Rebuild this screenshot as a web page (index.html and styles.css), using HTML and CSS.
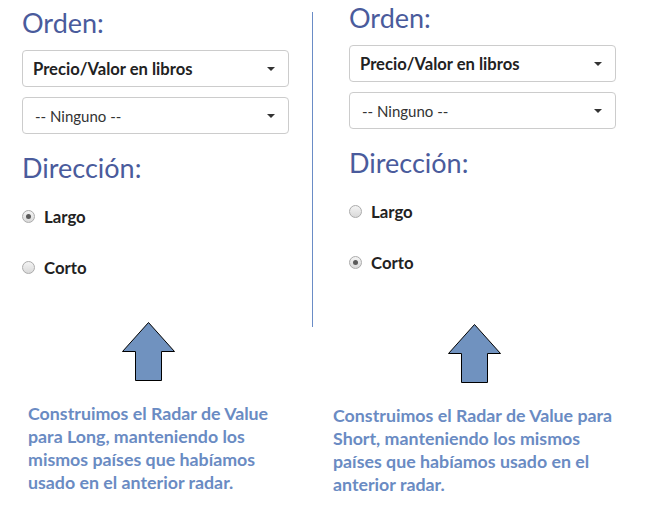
FILE: index.html
```html
<!DOCTYPE html>
<html lang="es">
<head>
<meta charset="utf-8">
<title>Radar de Value</title>
<link rel="stylesheet" href="styles.css">
</head>
<body>
<div class="page">
  <div class="col col-left">
    <div class="form">
      <h2 class="heading">Orden:</h2>
      <div class="select select-strong"><span>Precio/Valor en libros</span><i class="caret"></i></div>
      <div class="select select-plain"><span>-- Ninguno --</span><i class="caret"></i></div>
      <h2 class="heading heading-dir">Dirección:</h2>
      <label class="radio-row first"><span class="radio checked"></span><span class="radio-label">Largo</span></label>
      <label class="radio-row"><span class="radio"></span><span class="radio-label">Corto</span></label>
    </div>
    <svg class="arrow" width="54" height="60" viewBox="0 0 54 60"><polygon points="26.5,0.5 52.5,29.5 39.5,29.5 39.5,58.5 13.5,58.5 13.5,29.5 0.5,29.5" fill="#7092bf" stroke="#000" stroke-width="1"/></svg>
    <p class="caption">Construimos el Radar de Value<br>para Long, manteniendo los<br>mismos países que habíamos<br>usado en el anterior radar.</p>
  </div>
  <div class="divider"></div>
  <div class="col col-right">
    <div class="form">
      <h2 class="heading">Orden:</h2>
      <div class="select select-strong"><span>Precio/Valor en libros</span><i class="caret"></i></div>
      <div class="select select-plain"><span>-- Ninguno --</span><i class="caret"></i></div>
      <h2 class="heading heading-dir">Dirección:</h2>
      <label class="radio-row first"><span class="radio"></span><span class="radio-label">Largo</span></label>
      <label class="radio-row"><span class="radio checked"></span><span class="radio-label">Corto</span></label>
    </div>
    <svg class="arrow" width="54" height="60" viewBox="0 0 54 60"><polygon points="26.5,0.5 52.5,29.5 39.5,29.5 39.5,58.5 13.5,58.5 13.5,29.5 0.5,29.5" fill="#7092bf" stroke="#000" stroke-width="1"/></svg>
    <p class="caption">Construimos el Radar de Value para<br>Short, manteniendo los mismos<br>países que habíamos usado en el<br>anterior radar.</p>
  </div>
</div>
</body>
</html>
```
FILE: styles.css
```css
* { box-sizing: border-box; }
html, body { margin: 0; padding: 0; background: #fff; }
body { font-family: Lato, "Open Sans", sans-serif; color: #222; }

.page {
  display: flex;
  align-items: flex-start;
  width: 653px;
  height: 530px;
}

.col { display: flex; flex-direction: column; align-items: flex-start; }
.col-left { width: 312px; padding-left: 22px; padding-top: 7px; }
.col-right { width: 340px; padding-left: 20px; padding-top: 2px; }
.col-right .form { margin-left: 16px; }

.divider {
  width: 1px;
  height: 315px;
  margin-top: 12px;
  background: #6a8cc6;
  flex: none;
}

.form { width: 267px; }

.heading {
  margin: 0;
  font-size: 27px;
  line-height: 32px;
  font-weight: 400;
  color: #4a5b9c;
}
.heading-dir { margin-top: 18px; }

.select {
  display: flex;
  align-items: center;
  justify-content: space-between;
  height: 37px;
  border: 1px solid #ccc;
  border-radius: 4px;
  padding: 0 13px 0 10px;
  margin-top: 11px;
  color: #222;
}
.select-plain { margin-top: 10px; padding-left: 12px; }
.select-strong span { font-size: 16.6px; font-weight: 700; }
.select-plain span { font-size: 15px; font-weight: 400; color: #333; }

.caret {
  width: 0;
  height: 0;
  border-left: 4px solid transparent;
  border-right: 4px solid transparent;
  border-top: 4px solid #333;
}

.radio-row {
  display: flex;
  align-items: center;
  height: 24px;
  margin-top: 27px;
}
.radio-row.first { margin-top: 20px; }

.radio {
  width: 13px;
  height: 13px;
  border-radius: 50%;
  border: 1px solid #ababab;
  background: linear-gradient(#f4f4f4, #d9d9d9);
  flex: none;
  display: flex;
  align-items: center;
  justify-content: center;
}
.radio.checked::after {
  content: "";
  width: 5px;
  height: 5px;
  border-radius: 50%;
  background: #5a5a5a;
}
.radio-label {
  margin-left: 9px;
  font-size: 16.8px;
  font-weight: 700;
  color: #222;
}

.arrow { display: block; flex: none; }
.col-left .arrow { margin-top: 43px; margin-left: 100px; }
.col-right .arrow { margin-top: 50px; margin-left: 115px; }

.caption {
  margin: 20px 0 0 0;
  font-family: Lato, "Open Sans", sans-serif;
  font-size: 17.8px;
  font-weight: 700;
  line-height: 23px;
  color: #6a8bc3;
  white-space: nowrap;
}
.col-left .caption { margin-left: 6px; }
```
